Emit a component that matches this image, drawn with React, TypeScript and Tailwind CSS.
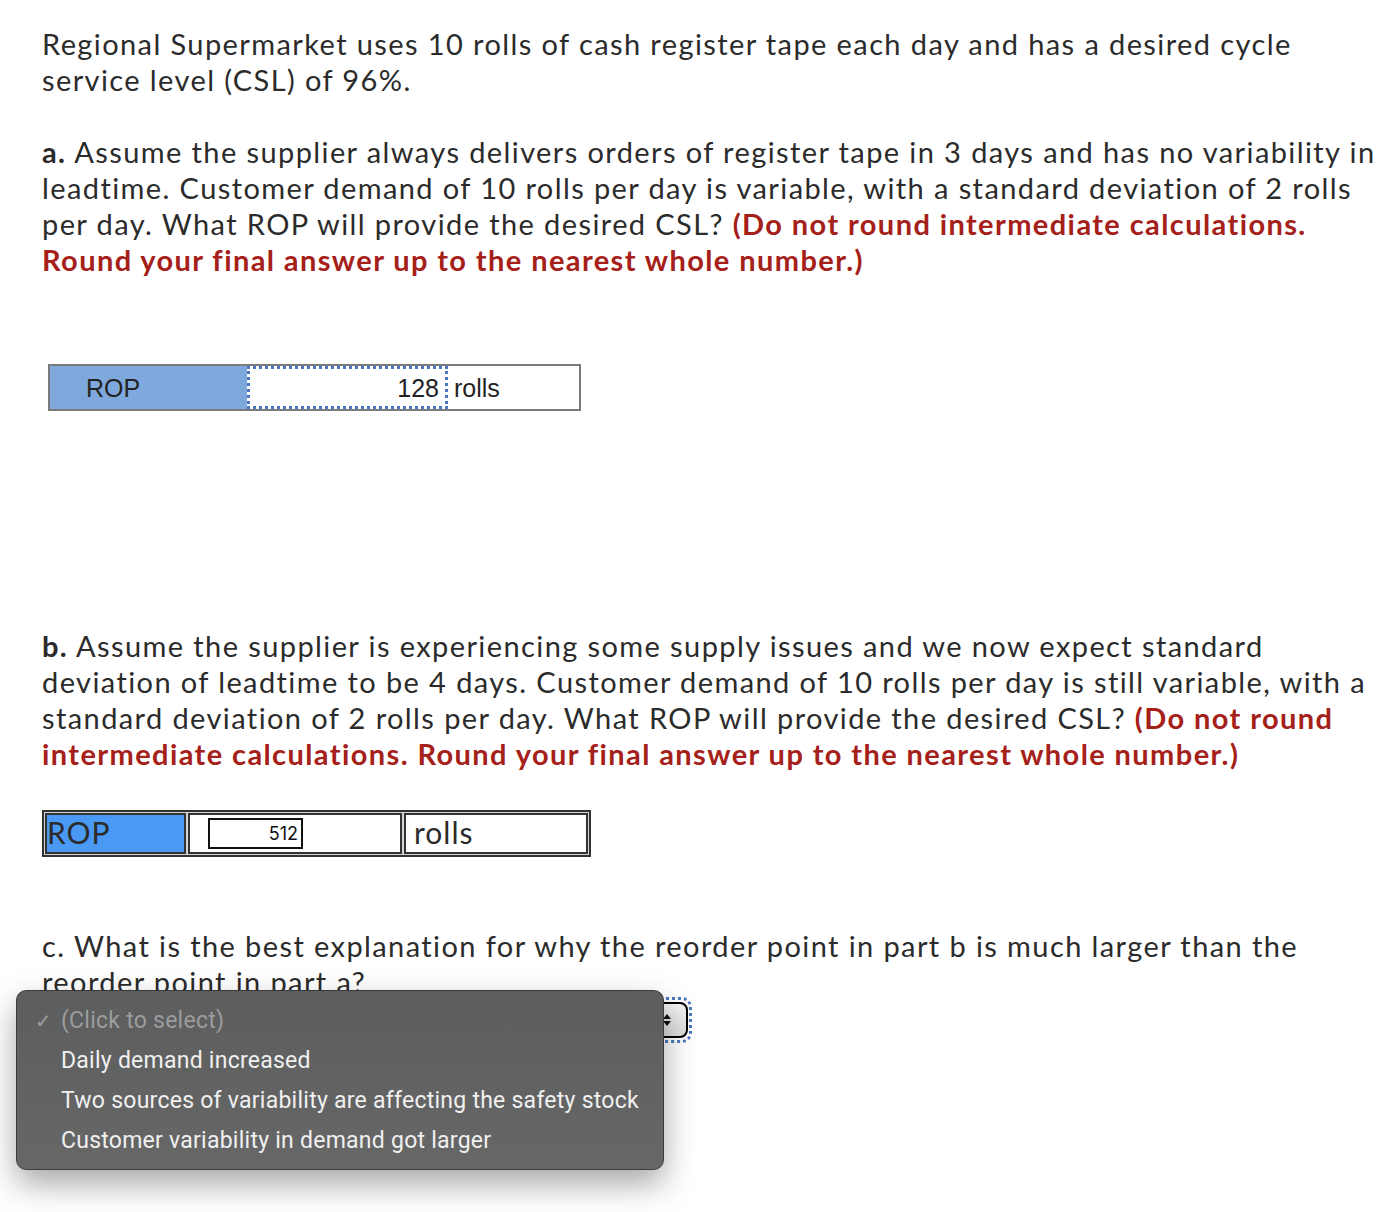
const RED = "text-[#a52019]";

function Red({ children }: { children: React.ReactNode }) {
  return <span className={`font-bold ${RED}`}>{children}</span>;
}

function Line({ children }: { children: React.ReactNode }) {
  return <span className="block whitespace-nowrap">{children}</span>;
}

export default function App() {
  return (
    <div
      className="relative min-h-[1212px] bg-white text-[#2b2b2b]"
      style={{ fontFamily: "Lato, Inter, sans-serif" }}
    >
      <div className="pl-[42px] pt-[26px] text-[29px] leading-[36px] tracking-[1.4px]">
        <p>
          <Line>Regional Supermarket uses 10 rolls of cash register tape each day and has a desired cycle</Line>
          <Line>service level (CSL) of 96%.</Line>
        </p>

        <p className="mt-[36px]">
          <Line>
            <span className="font-bold">a.</span> Assume the supplier always delivers orders of register tape in 3 days and has no variability in
          </Line>
          <Line>leadtime. Customer demand of 10 rolls per day is variable, with a standard deviation of 2 rolls</Line>
          <Line>
            per day. What ROP will provide the desired CSL? <Red>(Do not round intermediate calculations.</Red>
          </Line>
          <Line>
            <Red>Round your final answer up to the nearest whole number.)</Red>
          </Line>
        </p>

        {/* part a answer table */}
        <div
          className="ml-[6px] mt-[86px] flex w-[533px] h-[47px] border-2 border-[#7b7b7b] text-[25px] tracking-normal text-[#222]"
          style={{ fontFamily: "'Liberation Sans', Arial, sans-serif" }}
        >
          <div className="w-[197px] bg-[#7fa9dc] flex items-center pl-[36px]">ROP</div>
          <div className="w-[201px] border-[3px] border-dotted border-[#4a78c0] flex items-center justify-end pr-[6px]">
            128
          </div>
          <div className="flex-1 flex items-center pl-[6px]">rolls</div>
        </div>

        <p className="mt-[217px]">
          <Line>
            <span className="font-bold">b.</span> Assume the supplier is experiencing some supply issues and we now expect standard
          </Line>
          <Line>deviation of leadtime to be 4 days. Customer demand of 10 rolls per day is still variable, with a</Line>
          <Line>
            standard deviation of 2 rolls per day. What ROP will provide the desired CSL? <Red>(Do not round</Red>
          </Line>
          <Line>
            <Red>intermediate calculations. Round your final answer up to the nearest whole number.)</Red>
          </Line>
        </p>

        {/* part b answer table */}
        <div className="mt-[38px] w-[549px] h-[47px] border-2 border-[#333] p-px bg-[#d4d4d4] flex gap-[2px] tracking-[1px]">
          <div className="w-[141px] bg-[#4a99f5] border-2 border-[#333] flex items-center text-[30px] leading-none pb-[4px]">
            ROP
          </div>
          <div className="w-[214px] bg-white border-2 border-[#333] flex items-center pl-[18px]">
            <div
              className="w-[95px] h-[31px] border-2 border-[#111] text-[18px] tracking-normal flex items-center justify-end pr-[3px] text-[#111]"
              style={{ fontFamily: "Inter, sans-serif" }}
            >
              512
            </div>
          </div>
          <div className="flex-1 bg-white border-2 border-[#333] flex items-center pl-[8px] text-[30px] leading-none pb-[4px]">
            rolls
          </div>
        </div>

        <p className="mt-[71px]">
          <Line>c. What is the best explanation for why the reorder point in part b is much larger than the</Line>
          <Line>reorder point in part a?</Line>
        </p>

        {/* underlying select, mostly covered by the open menu */}
        <div className="mt-[2px] ml-[-22px] w-[668px] h-[36px] relative">
          <div className="absolute right-[-4px] top-[-5px] w-[48px] h-[46px] rounded-[10px] border-[3px] border-dotted border-[#4a78c0]" />
          <div className="absolute right-0 top-[0px] w-[42px] h-[36px] rounded-[8px] border-2 border-black bg-gradient-to-b from-[#f4f4f4] to-[#dcdcdc] flex items-center justify-end pr-[14px]">
            <svg width="10" height="16" viewBox="0 0 10 16">
              <path d="M1 7 L5 2 L9 7 Z" fill="#111" />
              <path d="M1 9 L5 14 L9 9 Z" fill="#111" />
            </svg>
          </div>
        </div>
      </div>

      {/* open dropdown menu */}
      <div
        className="absolute left-[16px] top-[990px] w-[648px] h-[180px] rounded-[10px] border border-[#3a3a3a] bg-gradient-to-b from-[#5c5d5e] to-[#676767] shadow-[0_14px_32px_rgba(0,0,0,0.35)] pt-[10px] text-[23px] leading-[40px] tracking-[0.25px]"
        style={{ fontFamily: "Roboto, 'Liberation Sans', sans-serif" }}
      >
        <div className="flex items-center text-[#9c9c9c]">
          <span className="w-[44px] pl-[18px] text-[20px]">✓</span>
          <span>(Click to select)</span>
        </div>
        <div className="pl-[44px] text-[#f0f0f0]">Daily demand increased</div>
        <div className="pl-[44px] text-[#f0f0f0]">Two sources of variability are affecting the safety stock</div>
        <div className="pl-[44px] text-[#f0f0f0]">Customer variability in demand got larger</div>
      </div>
    </div>
  );
}
